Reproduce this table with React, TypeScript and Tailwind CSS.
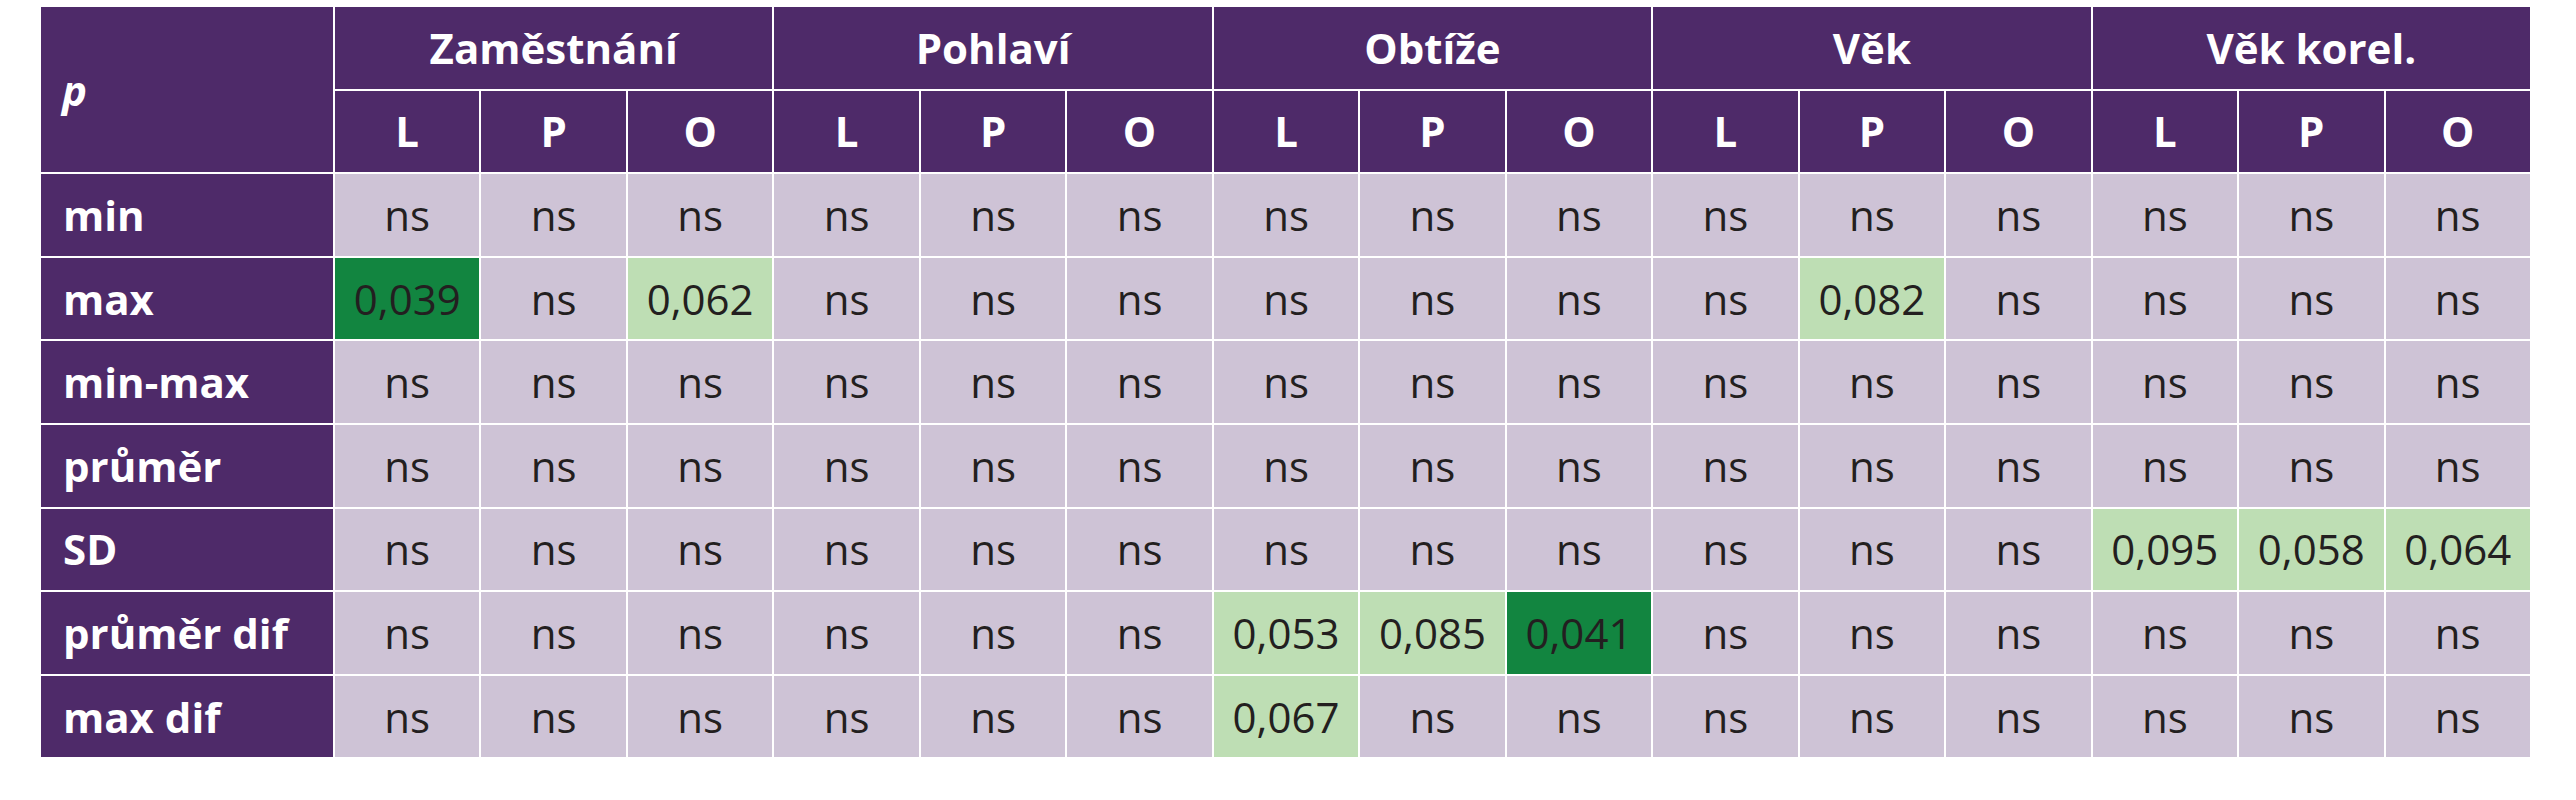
import React from "react"

const groups = ["Zaměstnání", "Pohlaví", "Obtíže", "Věk", "Věk korel."]
const subs = ["L", "P", "O"]

type Mark = "dark" | "light"

type Row = {
  label: string
  cells: Record<number, [string, Mark]>
}

const rows: Row[] = [
  { label: "min", cells: {} },
  { label: "max", cells: { 0: ["0,039", "dark"], 2: ["0,062", "light"], 10: ["0,082", "light"] } },
  { label: "min-max", cells: {} },
  { label: "průměr", cells: {} },
  { label: "SD", cells: { 12: ["0,095", "light"], 13: ["0,058", "light"], 14: ["0,064", "light"] } },
  { label: "průměr dif", cells: { 6: ["0,053", "light"], 7: ["0,085", "light"], 8: ["0,041", "dark"] } },
  { label: "max dif", cells: { 6: ["0,067", "light"] } },
]

const head = "bg-[#4e2a69] text-white font-bold flex items-center"

export default function App() {
  return (
    <div className="w-[2576px] h-[800px] bg-white pt-[7px] pl-[41px] font-['Open_Sans',sans-serif] text-[42px] leading-none">
      <div className="grid w-[2489px] grid-cols-[292px_repeat(15,minmax(0,1fr))] grid-rows-[repeat(9,81.6px)] gap-[2px]">
        <div className={`${head} row-span-2 pl-[21px] italic`}>p</div>
        {groups.map((g) => (
          <div key={g} className={`${head} col-span-3 justify-center`}>
            {g}
          </div>
        ))}
        {groups.map((g) =>
          subs.map((s) => (
            <div key={g + s} className={`${head} justify-center`}>
              {s}
            </div>
          ))
        )}
        {rows.map((row) => (
          <React.Fragment key={row.label}>
            <div className={`${head} pl-[22px] whitespace-nowrap`}>{row.label}</div>
            {Array.from({ length: 15 }, (_, i) => {
              const cell = row.cells[i]
              const bg = !cell ? "bg-[#cec3d6]" : cell[1] === "dark" ? "bg-[#128540]" : "bg-[#bedeb4]"
              return (
                <div key={i} className={`${bg} flex items-center justify-center text-[#231f20]`}>
                  {cell ? cell[0] : "ns"}
                </div>
              )
            })}
          </React.Fragment>
        ))}
      </div>
    </div>
  )
}
